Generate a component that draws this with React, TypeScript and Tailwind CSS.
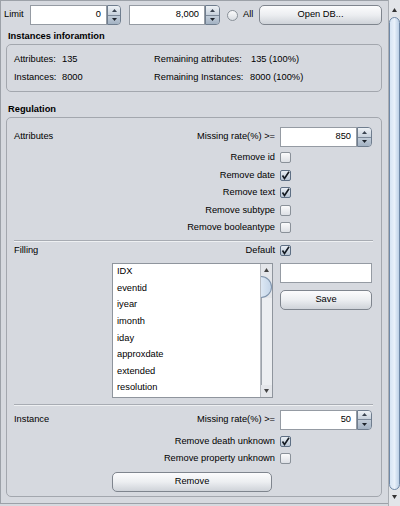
import React from 'react';

const font = "font-['Liberation_Sans',Arial,sans-serif]";

function Field({ value, w }: { value: string; w: string }) {
  return (
    <div className={`${w} h-[20px] bg-white border border-[#959ba3] flex items-center justify-end pr-[5px]`}>
      {value}
    </div>
  );
}

function Spin({ w = 'w-[14px]' }: { w?: string }) {
  return (
    <div className={`${w} h-[20px] flex flex-col border border-[#6f7d8e] rounded-r-[4px] overflow-hidden`}>
      <div className="flex-1 flex items-center justify-center bg-gradient-to-b from-[#eef2f6] to-[#c7d1dc] border-b border-[#7d8a9a]">
        <svg width="5" height="3" viewBox="0 0 5 3"><path d="M2.5 0L5 3H0z" fill="#3a4350" /></svg>
      </div>
      <div className="flex-1 flex items-center justify-center bg-gradient-to-b from-[#c2cdd9] to-[#a3b2c3]">
        <svg width="5" height="3" viewBox="0 0 5 3"><path d="M0 0H5L2.5 3z" fill="#1d232b" /></svg>
      </div>
    </div>
  );
}

function Check({ on }: { on?: boolean }) {
  return (
    <div
      className={`w-[11px] h-[11px] shrink-0 rounded-[2px] border flex items-center justify-center ${
        on
          ? 'border-[#5e6f84] bg-gradient-to-b from-[#e9eef4] to-[#b9c6d5]'
          : 'border-[#8a9199] bg-gradient-to-b from-[#fbfbfc] to-[#dde0e5]'
      }`}
    >
      {on && (
        <svg width="9" height="9" viewBox="0 0 9 9">
          <path d="M1.5 4.5L3.5 7.5L8 0.8" fill="none" stroke="#141a22" strokeWidth="1.6" />
        </svg>
      )}
    </div>
  );
}

function Button({ label, w }: { label: string; w: string }) {
  return (
    <div className={`${w} h-[20px] rounded-[5px] border border-[#7f858e] bg-gradient-to-b from-[#fcfcfd] via-[#eceef1] to-[#cfd3d9] flex items-center justify-center`}>
      {label}
    </div>
  );
}

function CheckRow({ label, on, h = 'h-[17.5px]' }: { label: string; on?: boolean; h?: string }) {
  return (
    <div className={`${h} flex items-center justify-end pr-[90px] gap-[5px]`}>
      <span>{label}</span>
      <Check on={on} />
    </div>
  );
}

function RateRow({ label, value }: { label: string; value: string }) {
  return (
    <div className="h-[20px] flex items-center pl-[7px] pr-[9px]">
      <span>{label}</span>
      <span className="ml-auto mr-[5px]">Missing rate(%) &gt;=</span>
      <Field value={value} w="w-[77px]" />
      <Spin w="w-[15px]" />
    </div>
  );
}

const items = ['IDX', 'eventid', 'iyear', 'imonth', 'iday', 'approxdate', 'extended', 'resolution'];

export default function App() {
  return (
    <div className={`${font} w-[400px] h-[506px] bg-[#d6d9df] text-[9.3px] leading-none text-black flex overflow-hidden`}>
      <div className="w-[388px] h-[504px] border-t border-l border-b border-[#9ca1a8] flex flex-col">
        {/* Top row */}
        <div className="h-[20px] mt-[4px] flex items-center">
          <span className="ml-[3px] w-[26px]">Limit</span>
          <Field value="0" w="w-[77px]" />
          <Spin />
          <div className="ml-[8px] flex">
            <Field value="8,000" w="w-[76px]" />
            <Spin w="w-[15px]" />
          </div>
          <div className="ml-[7px] w-[11px] h-[11px] rounded-full border border-[#8a9199] bg-gradient-to-b from-[#fbfbfc] to-[#d9dde2]" />
          <span className="ml-[5px] w-[16px]">All</span>
          <Button label="Open DB..." w="w-[123px]" />
        </div>

        <div className="h-[12px] mt-[6px] pl-[7px] flex items-center font-bold">Instances inforamtion</div>

        <div className="mt-[1px] ml-[5px] w-[376px] h-[48px] rounded-[5px] border border-[#a3a7ae] flex flex-col pt-[9px] gap-[6px]">
          <div className="h-[12px] flex items-center pl-[7px]">
            <span className="w-[48px]">Attributes:</span>
            <span className="w-[92px]">135</span>
            <span className="w-[97px]">Remaining attributes:</span>
            <span>135 (100%)</span>
          </div>
          <div className="h-[12px] flex items-center pl-[7px]">
            <span className="w-[48px]">Instances:</span>
            <span className="w-[92px]">8000</span>
            <span className="w-[96px]">Remaining Instances:</span>
            <span>8000 (100%)</span>
          </div>
        </div>

        <div className="h-[12px] mt-[12px] pl-[7px] flex items-center font-bold">Regulation</div>

        <div className="mt-[1px] ml-[5px] w-[376px] h-[380px] rounded-[5px] border border-[#a3a7ae] flex flex-col pt-[9px]">
          <RateRow label="Attributes" value="850" />
          <div className="mt-[2px]">
            <CheckRow label="Remove id" />
            <CheckRow label="Remove date" on />
            <CheckRow label="Remove text" on />
            <CheckRow label="Remove subtype" />
            <CheckRow label="Remove booleantype" />
          </div>
          <div className="mt-[3px] ml-[7px] w-[359px] h-[2px] border-t border-[#a8acb3] border-b border-b-[#eef0f2]" />

          <div className="mt-[2px] h-[14px] flex items-center pl-[7px] pr-[90px]">
            <span>Filling</span>
            <span className="ml-auto mr-[5px]">Default</span>
            <Check on />
          </div>

          <div className="mt-[5px] flex">
            <div className="ml-[105px] w-[161px] h-[135px] border border-[#8f959d] bg-white flex">
              <div className="flex-1 flex flex-col">
                {items.map((it) => (
                  <div key={it} className="h-[16.6px] flex items-center pl-[4px]">{it}</div>
                ))}
              </div>
              <div className="w-[12px] flex flex-col bg-[#e4e6ea] border-l border-[#b9bdc3]">
                <div className="h-[12px] flex items-center justify-center">
                  <svg width="5" height="4" viewBox="0 0 5 4"><path d="M2.5 0L5 4H0z" fill="#444" /></svg>
                </div>
                <div className="flex-1 flex flex-col">
                  <div className="h-[22px] rounded-r-full border border-l-0 border-[#7e93ab] bg-gradient-to-r from-[#dde8f4] to-[#c4d5e8]" />
                  <div className="flex-1 border-l border-[#9da3ab] bg-[#eceef1]" />
                </div>
                <div className="h-[12px] flex items-center justify-center">
                  <svg width="5" height="4" viewBox="0 0 5 4"><path d="M0 0H5L2.5 4z" fill="#444" /></svg>
                </div>
              </div>
            </div>
            <div className="ml-[7px] w-[92px] flex flex-col gap-[7px]">
              <div className="h-[20px] bg-white border border-[#959ba3]" />
              <Button label="Save" w="w-[92px]" />
            </div>
          </div>

          <div className="mt-[6px] ml-[7px] w-[359px] h-[2px] border-t border-[#a8acb3] border-b border-b-[#eef0f2]" />

          <div className="mt-[4px]">
            <RateRow label="Instance" value="50" />
          </div>
          <div className="mt-[3.5px]">
            <CheckRow label="Remove death unknown" on h="h-[17px]" />
            <CheckRow label="Remove property unknown" h="h-[17px]" />
          </div>
          <div className="mt-[4.5px] ml-[105px]">
            <Button label="Remove" w="w-[160px]" />
          </div>
        </div>
      </div>

      {/* Main scrollbar */}
      <div className="w-[12px] h-[506px] flex flex-col bg-[#e2e5e9] border-l border-[#a9adb3]">
        <div className="h-[14px] mt-[3px] flex items-center justify-center">
          <svg width="5" height="4" viewBox="0 0 5 4"><path d="M2.5 0L5 4H0z" fill="#333" /></svg>
        </div>
        <div className="flex-1 border border-[#6f88a6] rounded-t-[6px] rounded-b-[6px] bg-gradient-to-r from-[#d6e4f3] via-[#e9f1fa] to-[#bcd0e6]" />
        <div className="h-[14px] mb-[2px] flex items-center justify-center">
          <svg width="5" height="4" viewBox="0 0 5 4"><path d="M0 0H5L2.5 4z" fill="#333" /></svg>
        </div>
      </div>
    </div>
  );
}
